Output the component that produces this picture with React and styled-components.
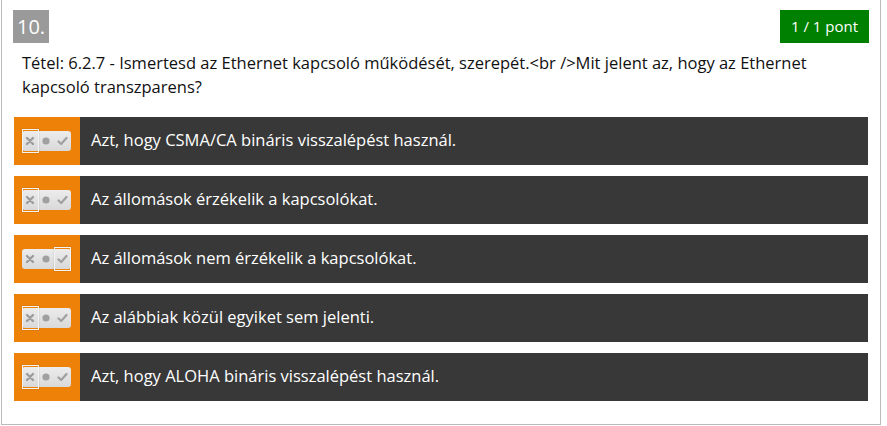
import React from "react";
import styled, { createGlobalStyle } from "styled-components";

const GlobalStyle = createGlobalStyle`
  body {
    margin: 0;
    background: #fff;
    font-family: "Open Sans", "Noto Sans", sans-serif;
  }
`;

const Card = styled.div`
  margin-left: 1px;
  border: 1px solid #bbb;
  border-top: none;
  padding: 10px 12px 23px 12px;
  width: 854px;
`;

const Header = styled.div`
  display: flex;
  justify-content: space-between;
  align-items: flex-start;
  height: 33px;
`;

const Number = styled.div`
  background: #9a9a9a;
  color: #fff;
  font-size: 20px;
  height: 33px;
  line-height: 33px;
  padding: 0 4px;
  margin-left: -1px;
`;

const Badge = styled.div`
  background: #008000;
  color: #fff;
  font-size: 15px;
  height: 33px;
  line-height: 33px;
  padding: 0 11px;
  margin-right: -1px;
`;

const Question = styled.div`
  color: #111;
  font-size: 16.5px;
  line-height: 24px;
  margin: 8px 30px 18px 8px;
`;

const Answers = styled.div`
  display: flex;
  flex-direction: column;
  gap: 11px;
`;

const Row = styled.div`
  display: flex;
  height: 48px;
`;

const Marker = styled.div`
  width: 66px;
  background: #ee8208;
  display: flex;
  align-items: center;
  padding-left: 8px;
  box-sizing: border-box;
`;

const Answer = styled.div`
  flex: 1;
  background: #383838;
  color: #fff;
  font-size: 16.5px;
  display: flex;
  align-items: center;
  padding: 0 0 3px 11px;
`;

const Pill = styled.div`
  display: flex;
  width: 49px;
  height: 20px;
  border-radius: 3px;
  background: linear-gradient(#ececec, #d9d9d9);
`;

const Seg = styled.div`
  width: 16px;
  display: flex;
  align-items: center;
  justify-content: center;
  position: relative;
  &::after {
    content: "";
    display: ${(p) => (p.$on ? "block" : "none")};
    position: absolute;
    left: 0;
    right: -1px;
    top: -2px;
    bottom: -2px;
    border: 1px solid #f4f4f4;
    box-shadow: 0 0 1px rgba(0, 0, 0, 0.3);
  }
`;

const Toggle = ({ sel }) => (
  <Pill>
    <Seg $on={sel === 0}>
      <svg width="10" height="10" viewBox="0 0 10 10">
        <path d="M2 2 L8 8 M8 2 L2 8" stroke="#9c9c9c" strokeWidth="2.4" strokeLinecap="round" />
      </svg>
    </Seg>
    <Seg $on={sel === 1}>
      <svg width="10" height="10" viewBox="0 0 10 10">
        <circle cx="5" cy="5" r="3.6" fill="#a0a0a0" />
      </svg>
    </Seg>
    <Seg $on={sel === 2}>
      <svg width="11" height="10" viewBox="0 0 11 10">
        <path d="M1.5 5.5 L4.2 8 L9.5 2" stroke="#a0a0a0" strokeWidth="2.2" fill="none" strokeLinecap="round" strokeLinejoin="round" />
      </svg>
    </Seg>
  </Pill>
);

const answers = [
  { text: "Azt, hogy CSMA/CA bináris visszalépést használ.", sel: 0 },
  { text: "Az állomások érzékelik a kapcsolókat.", sel: 0 },
  { text: "Az állomások nem érzékelik a kapcsolókat.", sel: 2 },
  { text: "Az alábbiak közül egyiket sem jelenti.", sel: 0 },
  { text: "Azt, hogy ALOHA bináris visszalépést használ.", sel: 0 },
];

const App = () => {
  return (
    <>
      <GlobalStyle />
      <Card>
        <Header>
          <Number>10.</Number>
          <Badge>1 / 1 pont</Badge>
        </Header>
        <Question>
          Tétel: 6.2.7 - Ismertesd az Ethernet kapcsoló működését, szerepét.&lt;br /&gt;Mit jelent az, hogy az Ethernet kapcsoló transzparens?
        </Question>
        <Answers>
          {answers.map((a, i) => (
            <Row key={i}>
              <Marker>
                <Toggle sel={a.sel} />
              </Marker>
              <Answer>{a.text}</Answer>
            </Row>
          ))}
        </Answers>
      </Card>
    </>
  );
};

export default App;
